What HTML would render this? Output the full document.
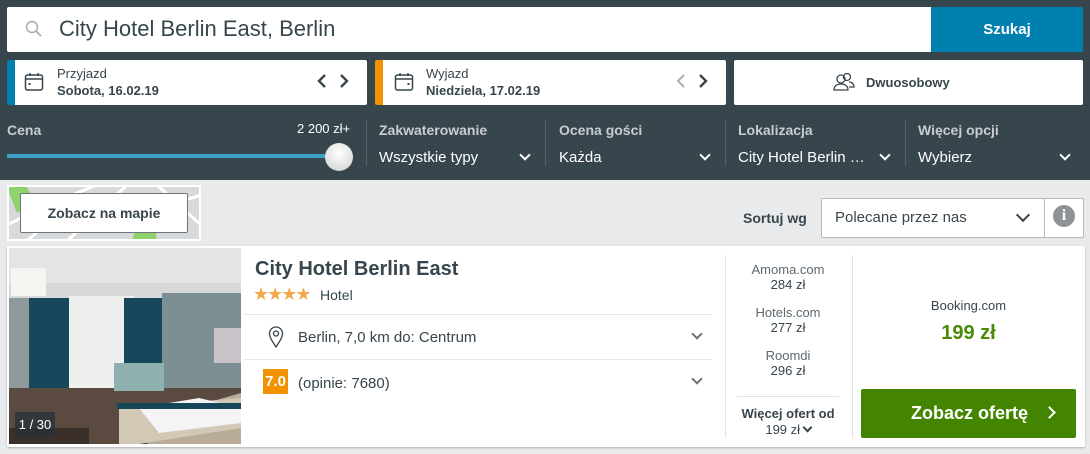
<!DOCTYPE html>
<html><head><meta charset="utf-8"><style>
*{box-sizing:border-box;margin:0;padding:0}
body{width:1090px;height:454px;overflow:hidden;background:#e9eaec;font-family:"Liberation Sans",sans-serif;position:relative;color:#37454d}
.abs{position:absolute}
.hdr{left:0;top:0;width:1090px;height:180px;background:#37454d}
.w{background:#fff;border-radius:2px}
.lbl{color:#c8cdd0;font-weight:bold;font-size:14px}
.val{color:#fff;font-size:15px}
.div{width:1px;background:#55626a;top:120px;height:46px}
.chev{width:8px;height:8px;border-right:2px solid #fff;border-bottom:2px solid #fff;transform:rotate(45deg)}
.gchev{width:8px;height:8px;border-right:2px solid #6b747a;border-bottom:2px solid #6b747a;transform:rotate(45deg)}
.pl{font-size:13px;color:#5d6870;text-align:center;width:120px;left:728px;line-height:15px}
</style></head><body>
<div class="abs hdr"></div>
<div class="abs w" style="left:7px;top:7px;width:924px;height:45px;border-radius:2px 0 0 2px"></div>
<svg class="abs" style="left:25px;top:20px" width="18" height="18" viewBox="0 0 18 18"><circle cx="7" cy="7" r="5.5" fill="none" stroke="#a3a9ad" stroke-width="1.4"/><line x1="11" y1="11" x2="16" y2="16" stroke="#a3a9ad" stroke-width="1.6"/></svg>
<div class="abs" style="left:59px;top:16px;font-size:22px;color:#37454d">City Hotel Berlin East, Berlin</div>
<div class="abs" style="left:931px;top:7px;width:152px;height:45px;background:#0080ae;color:#fff;font-weight:bold;font-size:15px;text-align:center;line-height:45px;border-radius:0 2px 2px 0">Szukaj</div>

<div class="abs w" style="left:7px;top:60px;width:360px;height:45px;border-left:8px solid #0080ae"></div>
<svg class="abs" style="left:24px;top:72px" width="20" height="20" viewBox="0 0 20 20"><rect x="1.5" y="3" width="17" height="15" rx="2" fill="none" stroke="#37454d" stroke-width="1.5"/><line x1="1.5" y1="7" x2="18.5" y2="7" stroke="#37454d" stroke-width="1.5"/><line x1="6" y1="1" x2="6" y2="4" stroke="#37454d" stroke-width="1.5"/><line x1="14" y1="1" x2="14" y2="4" stroke="#37454d" stroke-width="1.5"/><rect x="4.5" y="11" width="2" height="2" fill="#37454d"/></svg>
<div class="abs" style="left:57px;top:66px;font-size:13px">Przyjazd</div>
<div class="abs" style="left:57px;top:83px;font-size:13px;font-weight:bold">Sobota, 16.02.19</div>
<svg class="abs" style="left:316px;top:73px" width="36" height="16" viewBox="0 0 36 16"><polyline points="9,2 3,8 9,14" fill="none" stroke="#37454d" stroke-width="2.4"/><polyline points="25,2 31,8 25,14" fill="none" stroke="#37454d" stroke-width="2.4"/></svg>

<div class="abs w" style="left:375px;top:60px;width:351px;height:45px;border-left:8px solid #f39200"></div>
<svg class="abs" style="left:394px;top:72px" width="20" height="20" viewBox="0 0 20 20"><rect x="1.5" y="3" width="17" height="15" rx="2" fill="none" stroke="#37454d" stroke-width="1.5"/><line x1="1.5" y1="7" x2="18.5" y2="7" stroke="#37454d" stroke-width="1.5"/><line x1="6" y1="1" x2="6" y2="4" stroke="#37454d" stroke-width="1.5"/><line x1="14" y1="1" x2="14" y2="4" stroke="#37454d" stroke-width="1.5"/><rect x="13.5" y="11" width="2" height="2" fill="#37454d"/></svg>
<div class="abs" style="left:426px;top:66px;font-size:13px">Wyjazd</div>
<div class="abs" style="left:426px;top:83px;font-size:13px;font-weight:bold">Niedziela, 17.02.19</div>
<svg class="abs" style="left:675px;top:73px" width="36" height="16" viewBox="0 0 36 16"><polyline points="9,2 3,8 9,14" fill="none" stroke="#aab0b4" stroke-width="2"/><polyline points="25,2 31,8 25,14" fill="none" stroke="#37454d" stroke-width="2.4"/></svg>

<div class="abs w" style="left:734px;top:60px;width:349px;height:45px"></div>
<svg class="abs" style="left:832px;top:72px" width="24" height="20" viewBox="0 0 24 20"><circle cx="9" cy="7" r="4" fill="none" stroke="#37454d" stroke-width="1.3"/><path d="M2 18c0-4 3-6 7-6s7 2 7 6z" fill="none" stroke="#37454d" stroke-width="1.3"/><circle cx="15" cy="5" r="3.5" fill="none" stroke="#37454d" stroke-width="1.3"/><path d="M17 10c3 0 5 2 5 5h-5" fill="none" stroke="#37454d" stroke-width="1.3"/></svg>
<div class="abs" style="left:866px;top:75px;font-size:13px;font-weight:bold">Dwuosobowy</div>

<div class="abs lbl" style="left:7px;top:122px">Cena</div>
<div class="abs val" style="left:297px;top:121px;font-size:13px">2 200 zł+</div>
<div class="abs" style="left:7px;top:154px;width:330px;height:4px;background:#3ea0c4"></div>
<div class="abs" style="left:325px;top:143px;width:28px;height:28px;border-radius:50%;background:radial-gradient(circle at 50% 35%,#fff,#ddd 70%,#bbb)"></div>
<div class="abs div" style="left:366px"></div>
<div class="abs lbl" style="left:379px;top:122px">Zakwaterowanie</div>
<div class="abs val" style="left:379px;top:149px">Wszystkie typy</div>
<div class="abs chev" style="left:521px;top:151px"></div>
<div class="abs div" style="left:545px"></div>
<div class="abs lbl" style="left:559px;top:122px">Ocena gości</div>
<div class="abs val" style="left:559px;top:149px">Każda</div>
<div class="abs chev" style="left:701px;top:151px"></div>
<div class="abs div" style="left:725px"></div>
<div class="abs lbl" style="left:738px;top:122px">Lokalizacja</div>
<div class="abs val" style="left:738px;top:149px">City Hotel Berlin …</div>
<div class="abs chev" style="left:881px;top:151px"></div>
<div class="abs div" style="left:905px"></div>
<div class="abs lbl" style="left:918px;top:122px">Więcej opcji</div>
<div class="abs val" style="left:918px;top:149px">Wybierz</div>
<div class="abs chev" style="left:1061px;top:151px"></div>

<svg class="abs" style="left:7px;top:185px" width="194" height="56" viewBox="0 0 194 56"><rect width="194" height="56" fill="#d8d9da"/><path d="M0 2 L18 0 L28 15 L10 28 Z" fill="#8fd16a"/><path d="M125 56 L130 40 L148 40 L150 56Z" fill="#8fd16a"/><g stroke="#fff" stroke-width="3" fill="none"><path d="M0 40 L40 20 L90 0"/><path d="M60 56 L120 0"/><path d="M150 0 L194 40"/><path d="M130 30 L194 10"/><path d="M20 56 L50 30"/></g><rect x="1" y="1" width="192" height="54" fill="none" stroke="#fff" stroke-width="2"/></svg>
<div class="abs" style="left:20px;top:193px;width:168px;height:40px;background:#fff;border:1px solid #6b747a;border-radius:2px;text-align:center;line-height:38px;font-weight:bold;font-size:14px">Zobacz na mapie</div>

<div class="abs" style="left:743px;top:210px;font-size:14px;font-weight:bold">Sortuj wg</div>
<div class="abs" style="left:821px;top:198px;width:263px;height:40px;background:#fff;border:1px solid #b5babd;border-radius:2px"></div>
<div class="abs" style="left:835px;top:209px;font-size:15px">Polecane przez nas</div>
<div class="abs" style="left:1018px;top:210px;width:10px;height:10px;border-right:2px solid #37454d;border-bottom:2px solid #37454d;transform:rotate(45deg)"></div>
<div class="abs" style="left:1044px;top:198px;width:1px;height:40px;background:#b5babd"></div>
<div class="abs" style="left:1053px;top:205px;width:22px;height:22px;border-radius:50%;background:#8d9396;color:#fff;font-weight:bold;font-size:16px;text-align:center;line-height:22px;font-family:'Liberation Serif',serif">i</div>

<div class="abs" style="left:7px;top:246px;width:1078px;height:201px;background:#fff;box-shadow:0 1px 2px rgba(0,0,0,.25)"></div>
<svg class="abs" style="left:9px;top:248px" width="232" height="196" viewBox="0 0 232 196"><rect width="232" height="196" fill="#8e999c"/><path d="M0 35 L190 48 L232 40 L232 0 L0 0Z" fill="#e4e4e4"/><rect x="0" y="35" width="232" height="15" fill="#d8d8d8"/><rect x="20" y="50" width="55" height="146" fill="#17475a"/><rect x="60" y="48" width="65" height="145" fill="#eef0f0"/><rect x="115" y="50" width="38" height="145" fill="#17475a"/><rect x="153" y="45" width="79" height="151" fill="#7c9093"/><rect x="205" y="80" width="27" height="35" fill="#c7c3c8"/><rect x="0" y="140" width="232" height="56" fill="#5a4a40"/><path d="M110 180 L232 145 L232 196 L140 196Z" fill="#b9ad98"/><path d="M110 160 L232 150 L232 180 L130 196 L110 196Z" fill="#d2c8b6"/><path d="M130 160 L190 150 L232 160 L232 175 L150 185Z" fill="#f4f4f4"/><rect x="108" y="155" width="140" height="6" fill="#16465a"/><rect x="2" y="20" width="35" height="28" fill="#f5f5f2"/><rect x="105" y="115" width="50" height="28" fill="#8fb1b0"/><rect x="0" y="180" width="80" height="16" fill="#3a2f29"/></svg>
<div class="abs" style="left:15px;top:412px;width:40px;height:25px;background:rgba(40,50,56,.75);color:#fff;font-size:13px;text-align:center;line-height:25px;border-radius:2px">1 / 30</div>

<div class="abs" style="left:255px;top:258px;font-size:20px;font-weight:bold">City Hotel Berlin East</div>
<div class="abs" style="left:253px;top:284px;font-size:18px;color:#f3a94a;letter-spacing:-2px">★★★★</div>
<div class="abs" style="left:320px;top:287px;font-size:14px">Hotel</div>
<div class="abs" style="left:244px;top:314px;width:468px;height:1px;background:#e4e6e7"></div>
<svg class="abs" style="left:268px;top:326px" width="16" height="22" viewBox="0 0 16 22"><path d="M8 21 C4 15 1.5 11 1.5 7.5 A6.5 6.5 0 0 1 14.5 7.5 C14.5 11 12 15 8 21Z" fill="none" stroke="#37454d" stroke-width="1.3"/><circle cx="8" cy="7.5" r="2.5" fill="none" stroke="#37454d" stroke-width="1.3"/></svg>
<div class="abs" style="left:298px;top:329px;font-size:15px">Berlin, 7,0 km do: Centrum</div>
<div class="abs gchev" style="left:693px;top:330px"></div>
<div class="abs" style="left:244px;top:359px;width:468px;height:1px;background:#e4e6e7"></div>
<div class="abs" style="left:263px;top:369px;width:25px;height:25px;background:#f39200;color:#fff;font-weight:bold;font-size:15px;text-align:center;line-height:25px">7.0</div>
<div class="abs" style="left:298px;top:375px;font-size:15px">(opinie: 7680)</div>
<div class="abs gchev" style="left:693px;top:375px"></div>

<div class="abs" style="left:725px;top:255px;width:1px;height:183px;background:#e0e2e3"></div>
<div class="abs" style="left:852px;top:255px;width:1px;height:183px;background:#e0e2e3"></div>
<div class="abs pl" style="top:262px">Amoma.com<br><span style="color:#37454d">284 zł</span></div>
<div class="abs pl" style="top:305px">Hotels.com<br><span style="color:#37454d">277 zł</span></div>
<div class="abs pl" style="top:348px">Roomdi<br><span style="color:#37454d">296 zł</span></div>
<div class="abs" style="left:737px;top:396px;width:102px;height:1px;background:#e0e2e3"></div>
<div class="abs pl" style="top:406px;font-weight:bold;color:#37454d">Więcej ofert od</div>
<div class="abs pl" style="top:422px;color:#37454d;font-size:13px">199 zł <span style="display:inline-block;width:7px;height:7px;border-right:2px solid #37454d;border-bottom:2px solid #37454d;transform:rotate(45deg);position:relative;top:-3px"></span></div>

<div class="abs" style="left:861px;top:298px;width:215px;text-align:center;font-size:13px">Booking.com</div>
<div class="abs" style="left:861px;top:322px;width:215px;text-align:center;font-size:20px;font-weight:bold;color:#4a8a05">199 zł</div>
<div class="abs" style="left:861px;top:389px;width:215px;height:49px;background:#438500;border-radius:2px;color:#fff;font-weight:bold;font-size:18px;line-height:49px;padding-left:50px">Zobacz ofertę</div>
<div class="abs" style="left:1045px;top:408px;width:9px;height:9px;border-right:2px solid #fff;border-top:2px solid #fff;transform:rotate(45deg)"></div>
</body></html>
